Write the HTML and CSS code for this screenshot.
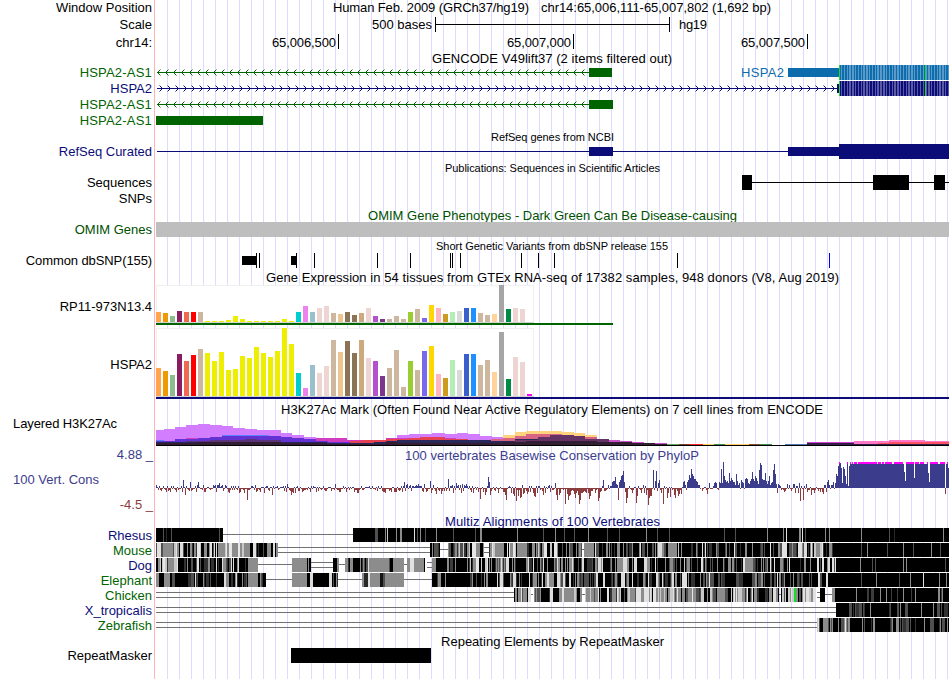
FILE: index.html
```
<!DOCTYPE html>
<html lang="en">
<head>
  <meta charset="UTF-8" />
  <title>Human chr14:65,006,111-65,007,802 - Genome Browser</title>
  <link rel="stylesheet" href="styles.css">
</head>
<body>

  <main class="browser">

    <!-- Ruler -->
    <div class="row">
      <span class="label wide">Window Position</span>
      <svg class="plot" viewBox="156 0 793 16" height="16">
        <text x="333" y="12" textLength="196">Human Feb. 2009 (GRCh37/hg19)</text>
        <text x="541" y="12" textLength="230">chr14:65,006,111-65,007,802 (1,692 bp)</text>
      </svg>
    </div>
    <div class="row">
      <span class="label">Scale</span>
      <svg class="plot" viewBox="156 16 793 18" height="18">
        <text x="372" y="29" textLength="60">500 bases</text>
        <path d="M435 17h1v7h233v-7h1v15h-1v-7h-233v7h-1z" />
        <text x="679" y="29" textLength="28">hg19</text>
      </svg>
    </div>
    <div class="row">
      <span class="label">chr14:</span>
      <svg class="plot" viewBox="156 34 793 17" height="17">
        <text x="272" y="47" textLength="64">65,006,500</text>
        <text x="507" y="47" textLength="64">65,007,000</text>
        <text x="741" y="47" textLength="64">65,007,500</text>
        <path d="M338 34h1v15h-1zM573 34h1v15h-1zM807 34h1v15h-1z" />
      </svg>
    </div>

    <!-- Genes -->
    <div class="row">
      <svg class="plot" viewBox="156 51 793 14" height="14">
        <text x="432" y="63" textLength="240">GENCODE V49lift37 (2 items filtered out)</text>
      </svg>
    </div>
    <div class="row">
      <span class="label green caps">HSPA2-AS1</span>
      <svg class="plot" id="gene1" viewBox="156 65 793 16" height="16">
        <text class="sky" x="741" y="77" textLength="43">HSPA2</text>
      </svg>
    </div>
    <div class="row">
      <span class="label navy">HSPA2</span>
      <svg class="plot" id="gene2" viewBox="156 81 793 16" height="16"></svg>
    </div>
    <div class="row">
      <span class="label green caps">HSPA2-AS1</span>
      <svg class="plot" id="gene3" viewBox="156 97 793 16" height="16"></svg>
    </div>
    <div class="row">
      <span class="label green caps">HSPA2-AS1</span>
      <svg class="plot" viewBox="156 113 793 16" height="16">
        <rect class="green" x="156" y="116" width="107" height="9" />
      </svg>
    </div>
    <div class="row">
      <svg class="plot small" viewBox="156 129 793 15" height="15">
        <text x="491" y="141" textLength="123">RefSeq genes from NCBI</text>
      </svg>
    </div>
    <div class="row">
      <span class="label navy">RefSeq Curated</span>
      <svg class="plot navy" viewBox="156 144 793 16" height="16">
        <path d="M157 151h792v1h-792zM589 147h24v9h-24zM788 147h51v9h-51zM839 144h110v15h-110z" />
      </svg>
    </div>

    <!-- Publications -->
    <div class="row">
      <svg class="plot small" viewBox="156 160 793 15" height="15">
        <text x="445" y="172" textLength="215">Publications: Sequences in Scientific Articles</text>
      </svg>
    </div>
    <div class="row">
      <span class="label">Sequences</span>
      <svg class="plot" viewBox="156 175 793 16" height="16">
        <path d="M742 175h10v7h121v-7h36v7h25v-7h11v7h4v1h-4v7h-11v-7h-25v7h-36v-7h-121v7h-10z" />
      </svg>
    </div>
    <div class="row">
      <span class="label">SNPs</span>
      <svg class="plot" viewBox="156 191 793 16" height="16"></svg>
    </div>

    <!-- OMIM and dbSNP -->
    <div class="row">
      <svg class="plot" viewBox="156 207 793 15" height="15">
        <text class="omim" x="368" y="220" textLength="369">OMIM Gene Phenotypes - Dark Green Can Be Disease-causing</text>
      </svg>
    </div>
    <div class="row">
      <span class="label omim">OMIM Genes</span>
      <svg class="plot" viewBox="156 222 793 16" height="16">
        <rect class="grey" x="156" y="222" width="793" height="15" />
      </svg>
    </div>
    <div class="row">
      <svg class="plot small" viewBox="156 238 793 15" height="15">
        <text x="436" y="250" textLength="232">Short Genetic Variants from dbSNP release 155</text>
      </svg>
    </div>
    <div class="row">
      <span class="label caps">Common dbSNP(155)</span>
      <svg class="plot" id="snps" viewBox="156 253 793 16" height="16"></svg>
    </div>

    <!-- GTEx -->
    <div class="row">
      <svg class="plot" viewBox="156 269 793 16" height="16">
        <text x="266" y="282" textLength="573">Gene Expression in 54 tissues from GTEx RNA-seq of 17382 samples, 948 donors (V8, Aug 2019)</text>
      </svg>
    </div>
    <div class="row">
      <span class="label low">RP11-973N13.4</span>
      <svg class="plot" id="gtex1" viewBox="156 285 793 42" height="42"></svg>
    </div>
    <div class="row">
      <span class="label low">HSPA2</span>
      <svg class="plot" id="gtex2" viewBox="156 327 793 74" height="74"></svg>
    </div>

    <!-- Regulation -->
    <div class="row">
      <svg class="plot" viewBox="156 401 793 16" height="16">
        <text x="281" y="414" textLength="542">H3K27Ac Mark (Often Found Near Active Regulatory Elements) on 7 cell lines from ENCODE</text>
      </svg>
    </div>
    <div class="row top">
      <span class="label left caps">Layered H3K27Ac</span>
      <svg class="plot" id="h3k" viewBox="156 417 793 30" height="30"></svg>
    </div>

    <!-- Conservation -->
    <div class="row">
      <div class="axis">
        <span class="limit blue">4.88 _</span>
        <span class="label left blue">100 Vert. Cons</span>
        <span class="limit red">-4.5 _</span>
      </div>
      <svg class="plot" id="phylop" viewBox="156 447 793 67" height="67">
        <text class="blue" x="405" y="460" textLength="294">100 vertebrates Basewise Conservation by PhyloP</text>
      </svg>
    </div>
    <div class="row">
      <svg class="plot" viewBox="156 514 793 14" height="14">
        <text class="navy" x="445" y="526" textLength="215">Multiz Alignments of 100 Vertebrates</text>
      </svg>
    </div>
    <div class="row">
      <span class="label navy">Rhesus</span>
      <svg class="plot" id="rhesus" viewBox="156 0 793 15" height="15"></svg>
    </div>
    <div class="row">
      <span class="label green">Mouse</span>
      <svg class="plot" id="mouse" viewBox="156 0 793 15" height="15"></svg>
    </div>
    <div class="row">
      <span class="label navy">Dog</span>
      <svg class="plot" id="dog" viewBox="156 0 793 15" height="15"></svg>
    </div>
    <div class="row">
      <span class="label green">Elephant</span>
      <svg class="plot" id="elephant" viewBox="156 0 793 15" height="15"></svg>
    </div>
    <div class="row">
      <span class="label green">Chicken</span>
      <svg class="plot" id="chicken" viewBox="156 0 793 15" height="15"></svg>
    </div>
    <div class="row">
      <span class="label navy">X_tropicalis</span>
      <svg class="plot" id="xenopus" viewBox="156 0 793 15" height="15"></svg>
    </div>
    <div class="row">
      <span class="label green">Zebrafish</span>
      <svg class="plot" id="zebrafish" viewBox="156 0 793 15" height="15"></svg>
    </div>

    <!-- Repeats -->
    <div class="row">
      <svg class="plot" viewBox="156 633 793 15" height="15">
        <text x="441" y="646" textLength="223">Repeating Elements by RepeatMasker</text>
      </svg>
    </div>
    <div class="row top">
      <span class="label low">RepeatMasker</span>
      <svg class="plot" viewBox="156 648 793 31" height="31">
        <rect x="291" y="648" width="140" height="15" />
      </svg>
    </div>

  </main>

  <script src="tracks.js"></script>
</body>
</html>
```
FILE: styles.css
```
* { box-sizing: border-box; }

body {
  margin: 0;
  background-color: white;
  font-family: "Liberation Sans", Arial, sans-serif;
  font-size: 13px;
  color: black;
}

/* guide lines every 12px, red line between labels and data */
.browser {
  width: 949px;
  height: 679px;
  overflow: hidden;
  background-image:
    linear-gradient(#ffb4b4, #ffb4b4),
    repeating-linear-gradient(to right, #dcdcff 0, #dcdcff 1px, transparent 1px, transparent 12px);
  background-repeat: no-repeat;
  background-size: 1px 100%, 782px 100%;
  background-position: 154px 0, 167px 0;
}

.row {
  display: flex;
  align-items: center;
  justify-content: flex-end;
}

.row.top {
  align-items: flex-start;
}

.label {
  width: 152px;
  margin-right: 4px;
  line-height: 14px;
  text-align: right;
  white-space: nowrap;
}

.label.left {
  padding-left: 13px;
  text-align: left;
}

.label.caps {
  letter-spacing: -0.1px;
}

.label.caps:not(.left) {
  letter-spacing: -0.1px;
}

.label.green.caps {
  letter-spacing: 0.2px;
}

/* one pixel lower than the middle of the row */
.label.low {
  padding-top: 1px;
}

.axis {
  width: 156px;
  height: 67px;
  padding-bottom: 1px;
  display: flex;
  flex-direction: column;
  justify-content: space-between;
}

.limit {
  padding-right: 3px;
  line-height: 16px;
  text-align: right;
}

.plot {
  display: block;
  width: 793px;
  flex: none;
  overflow: visible;
  shape-rendering: crispEdges;
}

.small {
  font-size: 11px;
}

.green { color: #006400; fill: #006400; }
.navy { color: #0c0c78; fill: #0c0c78; }
.sky { color: #0c6cac; fill: #0c6cac; }
.omim { color: #005000; fill: #005000; }
.blue { color: #3c3c8c; fill: #3c3c8c; }
.red { color: #8c3c3c; fill: #8c3c3c; }
.grey { fill: #bebebe; }
```
FILE: tracks.js
```
const NS = "http://www.w3.org/2000/svg";
const byId = id => document.getElementById(id);

function rect(svg, x, y, w, h, fill) {
  const r = document.createElementNS(NS, "rect");
  r.setAttribute("x", x);
  r.setAttribute("y", y);
  r.setAttribute("width", w);
  r.setAttribute("height", h);
  r.setAttribute("fill", fill);
  svg.appendChild(r);
}

let seed = 7;
function rnd() {
  seed = (seed * 16807) % 2147483647;
  return seed / 2147483647;
}

// ---- Genes ----
function intron(svg, x0, x1, y, first, dir, color, faint) {
  rect(svg, x0, y, x1 - x0, 1, color);
  for (let x = first; x < x1 - 1; x += 8) {
    for (let i = 1; i <= 3; i++) {
      const c = i === 3 ? faint : color;
      rect(svg, x - dir * i, y - i, 1, 1, c);
      rect(svg, x - dir * i, y + i, 1, 1, c);
    }
  }
}

function codons(svg, y, dark, light) {
  for (let x = 839; x < 949; x++) {
    const odd = Math.floor((x - 839) / 1.407) % 2;
    rect(svg, x, y, 1, 15, odd ? light : dark);
  }
  rect(svg, 839, y, 1, 15, "#14dc28");
  rect(svg, 925, y, 1, 15, "#14dc28");
}

const green = "#006400", navy = "#0c0c78", sky = "#0c6cac";
intron(byId("gene1"), 157, 589, 72, 157, -1, green, "#8cb98c");
rect(byId("gene1"), 589, 68, 23, 9, green);
rect(byId("gene1"), 788, 68, 51, 9, sky);
codons(byId("gene1"), 65, sky, "#5a9ac8");
intron(byId("gene2"), 157, 837, 88, 162, 1, navy, "#8c8cc3");
rect(byId("gene2"), 837, 84, 2, 9, navy);
codons(byId("gene2"), 81, navy, "#5a5aa4");
intron(byId("gene3"), 157, 589, 104, 157, -1, green, "#8cb98c");
rect(byId("gene3"), 589, 100, 24, 9, green);

// ---- dbSNP ----
rect(byId("snps"), 242, 256, 14, 9, "#000");
rect(byId("snps"), 291, 256, 5, 9, "#000");
[256, 259, 296, 314, 377, 410, 450, 452, 460, 521, 538, 554, 677].forEach(x => rect(byId("snps"), x, 253, 1, 15, "#000"));
rect(byId("snps"), 829, 253, 1, 15, "#00f");

// ---- GTEx ----
const tissues = [
  "#ffa54f", "#ee9a00", "#8fbc8f", "#8b1c62", "#ee6a50", "#ff0000", "#cdb79e",
  "#eeee00", "#eeee00", "#eeee00", "#eeee00", "#eeee00", "#eeee00", "#eeee00",
  "#eeee00", "#eeee00", "#eeee00", "#eeee00", "#eeee00", "#eeee00", "#00cdcd",
  "#ee82ee", "#9ac0cd", "#eed5d2", "#eed5d2", "#cdb79e", "#eec591", "#8b7355",
  "#8b7355", "#cdaa7d", "#eed5d2", "#b452cd", "#7a378b", "#cdb79e", "#cdb79e",
  "#cdb79e", "#9acd32", "#cdb79e", "#7a67ee", "#ffd700", "#ffb6c1", "#cd9b1d",
  "#b4eeb4", "#d9d9d9", "#3a5fcd", "#1e90ff", "#cdb79e", "#cdb79e", "#ffd39b",
  "#a6a6a6", "#008b45", "#eed5d2", "#eed5d2", "#ff00ff"
];
const rp11 = [10, 9, 6, 11, 10, 10, 10, 1, 1, 1, 2, 6, 3, 1, 1, 1, 1, 1, 3, 1, 10, 16, 10, 14, 16, 9, 8,
  10, 7, 9, 14, 6, 3, 3, 6, 3, 10, 13, 4, 17, 14, 8, 10, 11, 14, 14, 9, 7, 8, 37, 13, 14, 13, 0];
const hspa2 = [28, 25, 21, 42, 35, 41, 47, 43, 35, 44, 26, 27, 40, 38, 49, 43, 39, 45, 68, 52, 23, 8, 31, 23,
  30, 56, 44, 55, 43, 56, 38, 35, 20, 28, 46, 9, 35, 26, 45, 50, 22, 18, 36, 26, 42, 42, 31, 36, 24, 64,
  17, 39, 34, 2];

function gtex(svg, values, top, base, x1, color) {
  rect(svg, 156, top, 378, base - top, "#f0f0f0");
  rect(svg, 157, top + 1, 376, base - top - 1, "#fff");
  values.forEach((v, i) => rect(svg, 156 + i * 7, base - v, 5, v, tissues[i]));
  rect(svg, 156, base, 378, 1, "#d2d2d2");
  rect(svg, 156, base + 1, x1 - 156, 2, color);
}
gtex(byId("gtex1"), rp11, 285, 322, 613, green);
gtex(byId("gtex2"), hspa2, 328, 396, 949, navy);

// ---- H3K27Ac: steps of [x, top], last x closes the layer ----
function layer(color, steps) {
  for (let i = 0; i < steps.length - 1; i++) {
    const [x, y] = steps[i];
    rect(byId("h3k"), x, y, steps[i + 1][0] - x, 446 - y, color);
  }
}
layer("#d27dff", [[156, 430], [164, 429], [175, 427], [186, 425], [198, 424], [210, 425], [222, 426], [233, 428], [245, 429], [257, 430], [281, 433], [292, 435], [304, 437], [316, 438], [347, 440], [386, 438], [397, 435], [409, 434], [432, 433], [445, 434], [457, 433], [468, 434], [480, 436], [492, 437], [503, 438], [515]]);
layer("#ffd27d", [[503, 435], [515, 432], [526, 431], [562, 432], [574, 433], [585, 435], [597]]);
layer("#d23cbe", [[186, 438], [234, 437], [269, 439], [316, 438], [347, 440], [362, 441], [386, 438], [409, 438], [430, 438], [456, 440], [491, 440], [503]]);
layer("#d76482", [[491, 439], [503, 438], [515, 436], [526, 434], [562, 435], [574, 436], [585, 437], [597, 439], [609]]);
layer("#e64150", [[350, 441], [362, 440], [386, 439], [409, 438], [420, 437], [445, 439], [468, 441], [491]]);
layer("#5a82ff", [[156, 440], [164, 441], [222, 435], [269]]);
layer("#6432d2", [[156, 441], [175, 439], [198, 438], [210, 437], [222, 436], [281, 437], [292, 438], [304, 439], [316, 441], [328, 442], [350, 443], [362]]);
layer("#5a3278", [[186, 441], [210, 440], [245, 439], [257, 440], [281, 442], [316]]);
layer("#28285a", [[156, 442], [304, 442], [327, 443], [374, 442], [386, 441], [397, 440], [491, 441], [503, 441], [515, 439], [538, 438], [585, 439], [609, 441], [632, 443], [645]]);
layer("#643264", [[515, 440], [538, 437], [550, 435], [574, 436], [585, 439], [609]]);
layer("#c850c8", [[609, 440], [620, 441], [632, 442], [644, 443], [667, 444], [679]]);
layer("#321e32", [[156, 443], [198, 442], [281, 443], [327, 444], [386, 442], [397, 443], [503, 442], [526, 441], [597, 442], [632, 443], [655, 444], [690]]);
layer("#d23cd2", [[807, 442], [854, 441], [878, 442], [889]]);
layer("#ff78c8", [[854, 441], [889, 440], [925, 441], [949]]);
layer("#ff5064", [[878, 443], [889, 442], [949]]);
layer("#321e46", [[796, 444], [807, 443], [854, 444], [949]]);
[[667, 679, "#64a064"], [679, 690, "#823c32"], [690, 703, "#ff2828"], [703, 714, "#ffc864"], [714, 725, "#3c8c50"], [725, 749, "#ffc864"],
  [749, 760, "#825032"], [760, 772, "#3c8c50"], [785, 807, "#5078b4"]].forEach(([a, b, c]) => rect(byId("h3k"), a, 444, b - a, 1, c));
rect(byId("h3k"), 156, 445, 793, 1, "#000");

// ---- PhyloP: [from, to, typical up, typical down, share of positive bases] ----
const zones = [
  [156, 270, 3, 4, 0.42], [270, 400, 2, 4, 0.45], [400, 470, 4, 5, 0.5], [470, 505, 2, 6, 0.4],
  [505, 556, 3, 9, 0.3], [556, 600, 0, 13, 0], [600, 612, 4, 6, 0.45], [612, 625, 8, 5, 0.7],
  [625, 652, 3, 10, 0.35], [652, 660, 9, 4, 0.7], [660, 683, 2, 9, 0.2], [683, 700, 9, 1, 0.95],
  [700, 709, 1, 5, 0.2], [709, 718, 7, 1, 0.8], [718, 742, 9, 2, 0.85], [742, 776, 10, 1, 0.9],
  [776, 808, 4, 5, 0.5], [808, 824, 1, 6, 0.15], [824, 836, 6, 5, 0.6], [836, 850, 20, 0, 1], [850, 949, 26, 0, 1]
];
const peaks = {
  183: 8, 190: 6, 198: 6, 219: 5, 287: 4, 335: 4, 404: 6, 407: 4, 430: 7, 448: 9, 456: 5, 488: 11, 489: 6,
  555: 5, 603: 8, 615: 11, 620: 8, 621: 12, 622: 13, 623: 17, 653: 18, 656: 17, 688: 8, 689: 13, 690: 10, 691: 19,
  692: 14, 693: 12, 694: 9, 721: 19, 723: 26, 724: 12, 729: 15, 731: 10, 736: 14, 741: 8, 752: 16, 755: 12,
  759: 18, 760: 25, 761: 23, 765: 15, 769: 12, 773: 18, 774: 24, 775: 14, 793: 4, 799: 5, 828: 8, 835: 5,
  836: 14, 837: 12, 838: 22, 839: 26, 840: 25, 841: 20, 842: 5, 843: 21, 844: 19, 845: 12, 846: 4, 847: 26, 848: 2,
  849: 22, 904: 16, 905: 7, 914: 10, 928: 15, 929: 6, 945: -6, 948: 20,
  185: -7, 247: -12, 272: -7, 291: -7, 480: -11, 506: -12, 516: -13, 565: -16, 579: -16, 580: -12,
  618: -12, 626: -15, 636: -15, 648: -17, 663: -16, 800: -13, 803: -12
};
const ph = byId("phylop");
zones.forEach(([a, b, up, down, share]) => {
  for (let x = a; x < b; x++) {
    const positive = rnd() < share;
    const size = rnd();
    let v = positive ? up * (0.3 + size * 0.7) : -(1 + down * size * size);
    if (x >= 850) v = size < 0.8 ? 26 : 23 + size;
    if (x in peaks) v = peaks[x];
    v = Math.round(v);
    if (v > 0) rect(ph, x, 488 - v, 1, v, "#3c3c8c");
    if (v < 0) rect(ph, x, 488, 1, -v, "#8c3c3c");
    if (v >= 26 && x > 835) rect(ph, x, 462, 1, 2, "#ff00ff");
  }
});

// ---- Multiz alignments ----
const palette = {
  black: ["#000", "#000", "#000", "#000", "#000", "#000", "#000", "#000", "#3c3c3c", "#8c8c8c"],
  striped: ["#000", "#000", "#000", "#000", "#000", "#000", "#323232", "#505050", "#8c8c8c", "#505050"],
  dark: ["#000", "#000", "#000", "#000", "#000", "#323232", "#505050", "#8c8c8c", "#8c8c8c", "#dcdcdc"],
  mixed: ["#000", "#000", "#000", "#323232", "#505050", "#8c8c8c", "#8c8c8c", "#8c8c8c", "#c8c8c8", "#e6e6e6"],
  light: ["#000", "#505050", "#8c8c8c", "#8c8c8c", "#8c8c8c", "#c8c8c8", "#e1e1e1", "#e1e1e1"]
};

function align(id, parts, marks) {
  const svg = byId(id);
  parts.forEach(([a, b, kind]) => {
    if (kind === "-") {
      rect(svg, a, 6, b - a, 1, "#707070");
    } else if (kind === "=") {
      rect(svg, a, 4, b - a, 1, "#707070");
      rect(svg, a, 9, b - a, 1, "#707070");
    } else if (palette[kind]) {
      let x = a;
      while (x < b) {
        const w = Math.min(b - x, rnd() < 0.7 ? 1 : 2 + Math.floor(rnd() * 2));
        rect(svg, x, 0, w, 14, palette[kind][Math.floor(rnd() * palette[kind].length)]);
        x += w;
      }
    } else {
      rect(svg, a, 0, b - a, 14, kind);
    }
  });
  (marks || []).forEach(([x, w, c]) => rect(svg, x, 0, w, 14, c));
}

const g = "#8c8c8c", k = "#000", d = "#505050", l = "#e1e1e1";
align("rhesus", [[156, 223, k], [223, 353, "-"], [353, 949, k]],
  [[163, 1, d], [166, 1, "#282828"], [171, 1, d], [219, 1, d], [375, 3, d], [385, 1, g], [387, 1, "#c8c8c8"], [396, 1, g], [400, 2, g],
    [414, 1, l], [417, 1, d], [420, 1, g], [425, 1, d], [436, 1, g], [453, 1, d], [475, 1, d], [480, 2, g], [517, 1, g], [543, 1, d],
    [555, 1, g], [564, 1, d], [574, 1, d], [588, 1, g], [607, 1, d], [619, 1, d], [646, 1, g], [657, 1, d], [669, 1, d], [724, 1, d],
    [735, 1, d], [767, 1, g], [783, 1, g], [786, 1, l], [799, 1, g], [800, 1, g], [802, 1, l], [805, 1, d], [825, 1, g], [829, 1, g],
    [861, 1, g], [889, 1, d], [894, 1, "#282828"], [943, 1, g]]);
align("mouse", [[156, 179, "light"], [179, 196, "dark"], [196, 204, "mixed"], [204, 222, "dark"], [222, 258, "mixed"], [258, 278, "dark"],
  [278, 430, "="], [430, 440, "dark"], [440, 448, "-"], [448, 484, "mixed"], [484, 489, "="], [489, 582, "mixed"], [582, 584, "-"],
  [584, 592, g], [592, 668, "dark"], [668, 677, g], [677, 685, "mixed"], [685, 780, "striped"], [780, 810, "dark"], [810, 825, "mixed"],
  [825, 833, "striped"], [833, 949, k]],
  [[158, 3, l], [163, 10, g], [210, 2, l], [218, 5, g], [233, 5, g], [246, 4, g], [253, 3, l], [259, 4, k], [264, 3, k], [517, 7, g],
    [702, 1, l], [705, 1, l], [734, 1, l], [770, 1, l], [782, 5, l], [798, 4, l], [817, 3, g], [861, 1, d], [867, 1, g], [887, 1, d],
    [903, 1, g], [913, 1, d], [931, 1, g], [940, 1, d]]);
align("dog", [[156, 181, "mixed"], [181, 248, "dark"], [248, 258, g], [258, 292, "-"], [292, 306, g], [306, 311, "dark"], [311, 333, "="],
  [333, 337, k], [337, 339, g], [339, 345, "-"], [345, 348, g], [348, 369, "dark"], [369, 389, g], [389, 395, "dark"], [395, 404, g],
  [404, 407, "-"], [407, 410, g], [410, 414, l], [414, 424, g], [424, 425, k], [427, 432, "="], [432, 436, g], [436, 470, "black"],
  [470, 490, "mixed"], [490, 680, "dark"], [680, 690, "mixed"], [690, 816, "striped"], [816, 836, "dark"], [836, 949, k]],
  [[168, 5, g], [197, 2, l], [439, 7, k], [456, 7, k], [701, 2, l], [743, 2, l], [745, 7, g], [770, 1, l], [774, 1, l], [789, 1, l],
    [817, 2, l], [822, 2, l], [832, 2, l], [835, 1, l], [860, 1, g], [872, 1, d], [875, 1, d], [903, 1, g], [906, 1, g], [945, 1, d]]);
align("elephant", [[156, 236, "dark"], [236, 250, "dark"], [250, 258, g], [258, 266, "mixed"], [266, 292, "-"], [292, 307, g],
  [307, 338, "dark"], [338, 362, "-"], [362, 404, g], [404, 432, "-"], [432, 475, "black"], [475, 520, "dark"], [520, 690, "dark"],
  [690, 828, "striped"], [828, 949, k]],
  [[177, 7, k], [217, 7, k], [364, 4, "#282828"], [368, 2, l], [380, 3, "#141414"], [383, 2, d], [682, 5, l], [709, 1, l], [777, 1, l],
    [818, 2, l], [826, 2, l], [861, 1, d], [876, 1, g], [899, 1, d], [910, 1, g], [923, 1, l], [939, 1, g], [946, 1, g]]);
align("chicken", [[156, 514, "="], [514, 531, "light"], [531, 533, "-"], [534, 555, "dark"], [555, 582, "light"], [582, 585, "-"],
  [585, 600, "mixed"], [600, 640, "mixed"], [640, 680, "light"], [680, 760, "mixed"], [760, 779, "dark"], [779, 781, "-"],
  [781, 816, "light"], [817, 820, "="], [820, 825, "dark"], [825, 832, "-"], [832, 835, g], [835, 949, "black"]],
  [[567, 7, g], [636, 5, l], [717, 6, g], [759, 6, k], [794, 2, "#14dc28"], [835, 8, k]]);
align("xenopus", [[156, 836, "="], [836, 848, k], [848, 949, "striped"]]);
align("zebrafish", [[156, 817, "="], [817, 820, "light"], [820, 823, k], [823, 828, g], [828, 847, "mixed"], [847, 949, "striped"]],
  [[833, 5, k], [850, 12, k], [875, 14, k], [925, 5, k]]);
```
